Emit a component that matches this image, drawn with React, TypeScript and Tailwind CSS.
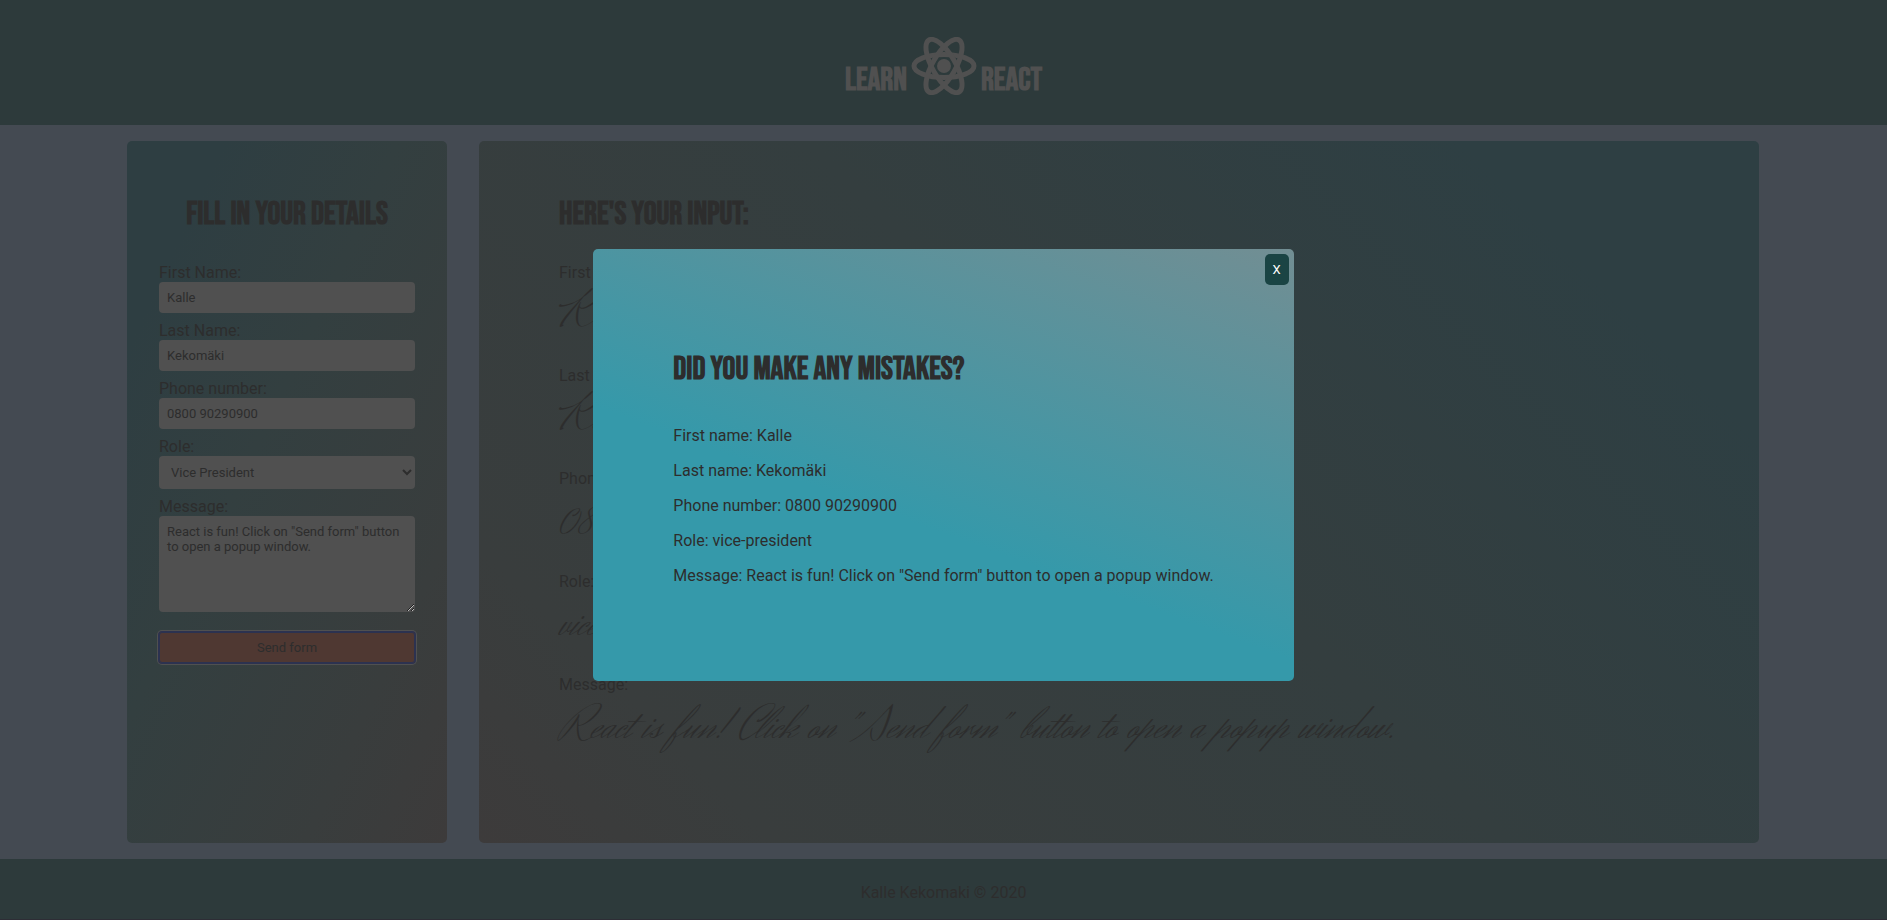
import { useState } from "react";

const headingFont = "font-['Bebas_Neue','Liberation_Sans',sans-serif] font-bold uppercase text-[32px]";
const heading = `${headingFont} leading-8`;
const field = "block w-full rounded bg-[#505050] px-2 text-[13px] text-[#2d2d2d]";
const label = "block leading-[19px]";

const message = 'React is fun! Click on "Send form" button to open a popup window.';

function ReactLogo() {
  return (
    <svg viewBox="0 0 66 58" className="h-[58px] w-[66px]" fill="none" stroke="#505050" strokeWidth="5" aria-hidden="true">
      <ellipse cx="33" cy="29" rx="30" ry="11.5" />
      <ellipse cx="33" cy="29" rx="30" ry="11.5" transform="rotate(60 33 29)" />
      <ellipse cx="33" cy="29" rx="30" ry="11.5" transform="rotate(120 33 29)" />
      <circle cx="33" cy="29" r="7" fill="#505050" stroke="none" />
    </svg>
  );
}

export default function App() {
  const [open, setOpen] = useState(true);
  const rows = [
    ["First Name:", "Kalle"],
    ["Last Name:", "Kekomäki"],
    ["Phone number:", "0800 90290900"],
    ["Role:", "vice-president"],
    ["Message:", message],
  ];
  const summary = [
    "First name: Kalle",
    "Last name: Kekomäki",
    "Phone number: 0800 90290900",
    "Role: vice-president",
    "Message: " + message,
  ];
  return (
    <div className="flex min-h-screen flex-col bg-[#444a52] font-[Roboto,sans-serif] text-base text-[#2d2d2d]">
      <header className="flex justify-center bg-[#2d3a3b] pt-[37px] pb-[30px]">
        <h1 className="flex items-end gap-1 text-[#505050]">
          <span className={`${headingFont} leading-7`}>Learn</span>
          <ReactLogo />
          <span className={`${headingFont} leading-7`}>React</span>
        </h1>
      </header>

      <main className="mx-auto flex w-full max-w-[1633px] grow gap-8 py-4 pr-px">
        <form
          className="w-80 shrink-0 rounded-[5px] bg-[linear-gradient(115deg,#2e3e42_15%,#333f40_42%,#393d3d_78%,#3d3b3b)] px-8 pt-[58px]"
          onSubmit={(e) => {
            e.preventDefault();
            setOpen(true);
          }}
        >
          <h2 className={`${heading} mb-8 text-center whitespace-nowrap`}>Fill in your details</h2>
          <label htmlFor="first" className={label}>First Name:</label>
          <input id="first" defaultValue="Kalle" className={`${field} mb-2 h-[31px]`} />
          <label htmlFor="last" className={label}>Last Name:</label>
          <input id="last" defaultValue="Kekomäki" className={`${field} mb-2 h-[31px]`} />
          <label htmlFor="phone" className={label}>Phone number:</label>
          <input id="phone" defaultValue="0800 90290900" className={`${field} mb-2 h-[31px]`} />
          <label htmlFor="role" className={label}>Role:</label>
          <select id="role" className={`${field} mb-2 h-[33px]`}>
            <option>Vice President</option>
          </select>
          <label htmlFor="message" className={label}>Message:</label>
          <textarea id="message" defaultValue={message} className={`${field} mb-5 h-24 py-2 leading-[15px]`} />
          <button
            type="submit"
            className="block h-[31px] w-full rounded-[3px] bg-[#4f3832] text-[13px] shadow-[inset_0_0_0_1px_#2c3250,0_0_0_1px_#2c3250,0_0_0_2px_#505050]"
          >
            Send form
          </button>
        </form>

        <section className="min-w-0 grow rounded-[5px] bg-[linear-gradient(45deg,#3d3b3b,#393d3d_15%,#343e3f_52%,#2e3f43_85%)] px-20 pt-[58px]">
          <h2 className={`${heading} mb-8`}>Here's your input:</h2>
          <dl>
            {rows.map(([name, value]) => (
              <div key={name} className="mb-4 h-[87px]">
                <dt className="leading-[19px]">{name}</dt>
                <dd className="pt-[10px] font-['Herr_Von_Muellerhoff','Liberation_Serif',cursive] text-5xl leading-[48px]">{value}</dd>
              </div>
            ))}
          </dl>
        </section>
      </main>

      <footer className="border-b border-[#2d2d35] bg-[#2d3a3b] pt-6 pb-4 text-center leading-5">Kalle Kekomaki © 2020</footer>

      {open && (
        <div className="fixed inset-0 flex items-center justify-center pt-[10px]">
          <div
            role="dialog"
            aria-labelledby="dialog-title"
            className="relative rounded-[5px] bg-[linear-gradient(20deg,#3599aa_40%,#728e93)] px-20 pt-[105px] pb-24"
          >
            <button
              type="button"
              aria-label="Close"
              onClick={() => setOpen(false)}
              className="absolute top-[5px] right-[5px] h-[31px] w-6 rounded-[5px] bg-[#1a4444] text-[13px] text-white"
            >
              X
            </button>
            <h2 id="dialog-title" className={`${heading} mb-10`}>Did you make any mistakes?</h2>
            <div className="flex flex-col gap-4">
              {summary.map((line) => (
                <p key={line} className="leading-[19px]">{line}</p>
              ))}
            </div>
          </div>
        </div>
      )}
    </div>
  );
}
